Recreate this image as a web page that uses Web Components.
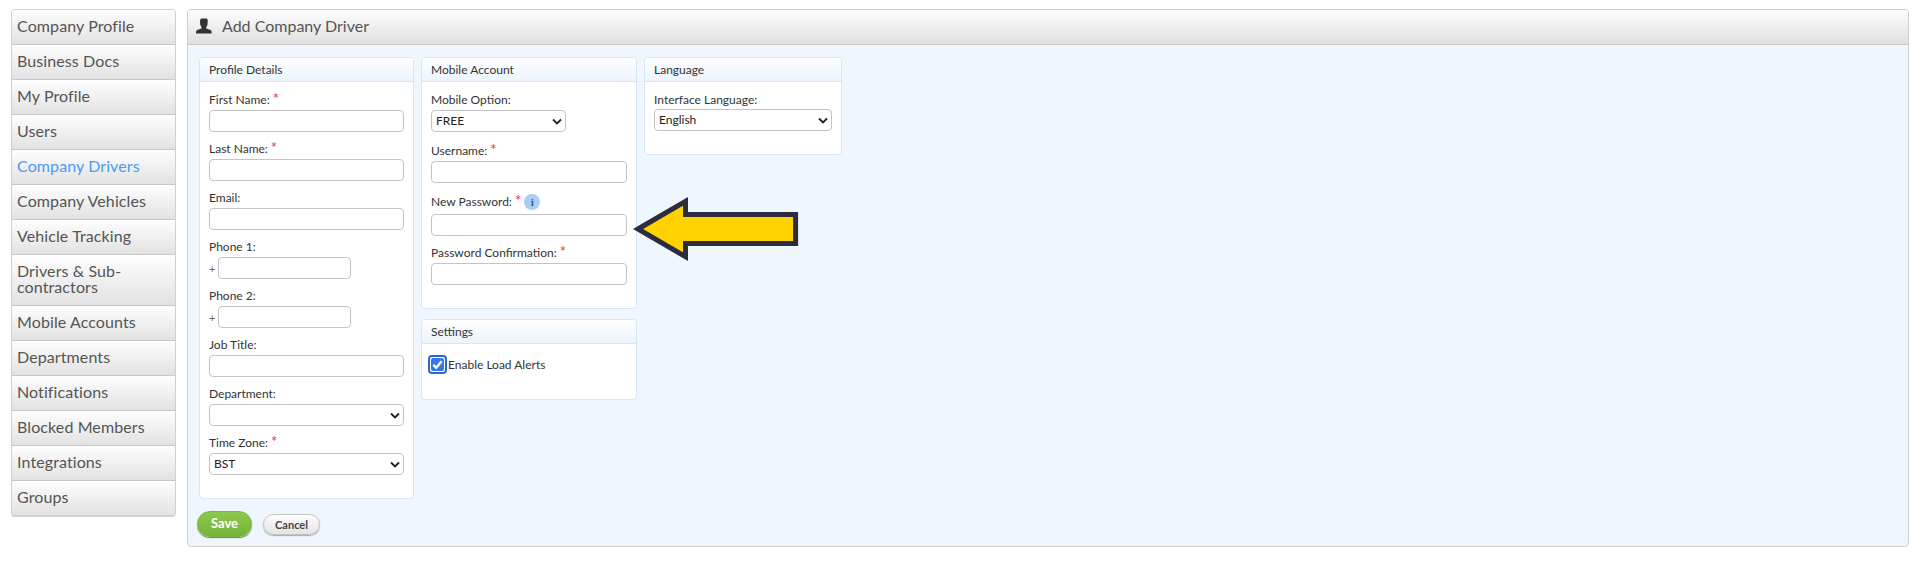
<!DOCTYPE html>
<html>
<head>
<meta charset="utf-8">
<title>Add Company Driver</title>
<style>
  html, body { margin: 0; background: #fff; }
  body { font-family: Lato, "Liberation Sans", sans-serif; color: #333; }
</style>
</head>
<body>
<driver-page>
  <side-nav slot="nav">
    <nav-item>Company Profile</nav-item>
    <nav-item>Business Docs</nav-item>
    <nav-item>My Profile</nav-item>
    <nav-item>Users</nav-item>
    <nav-item active>Company Drivers</nav-item>
    <nav-item>Company Vehicles</nav-item>
    <nav-item>Vehicle Tracking</nav-item>
    <nav-item>Drivers &amp; Sub-<br>contractors</nav-item>
    <nav-item>Mobile Accounts</nav-item>
    <nav-item>Departments</nav-item>
    <nav-item>Notifications</nav-item>
    <nav-item>Blocked Members</nav-item>
    <nav-item>Integrations</nav-item>
    <nav-item last>Groups</nav-item>
  </side-nav>
  <main-box slot="main" heading="Add Company Driver">
    <div style="display:flex;gap:7px;align-items:flex-start">
      <form-panel heading="Profile Details" style="width:215px;--pad-bottom:17px">
        <form-field label="First Name:" required></form-field>
        <form-field label="Last Name:" required></form-field>
        <form-field label="Email:"></form-field>
        <form-field label="Phone 1:" phone></form-field>
        <form-field label="Phone 2:" phone></form-field>
        <form-field label="Job Title:"></form-field>
        <form-field label="Department:" select=""></form-field>
        <form-field label="Time Zone:" required select="BST"></form-field>
      </form-panel>
      <div style="display:flex;flex-direction:column;gap:10px;width:216px">
        <form-panel heading="Mobile Account" style="--pad-bottom:17px">
          <form-field label="Mobile Option:" select="FREE" width="135" gap="8"></form-field>
          <form-field label="Username:" required></form-field>
          <form-field label="New Password:" required info></form-field>
          <form-field label="Password Confirmation:" required></form-field>
        </form-panel>
        <form-panel heading="Settings" style="--pad-bottom:0px">
          <check-row>Enable Load Alerts</check-row>
        </form-panel>
      </div>
      <form-panel heading="Language" style="width:198px;--pad-bottom:17px">
        <form-field label="Interface Language:" select="English" short></form-field>
      </form-panel>
    </div>
    <div style="display:flex;align-items:center;gap:11px;margin:12px 0 0 -2px">
      <app-button primary>Save</app-button>
      <app-button>Cancel</app-button>
    </div>
  </main-box>
  <call-arrow slot="main"></call-arrow>
</driver-page>

<script>
class DriverPage extends HTMLElement {
  constructor() {
    super();
    this.attachShadow({mode: 'open'}).innerHTML = `
      <style>
        :host { display: flex; align-items: flex-start; gap: 11px; padding: 9px 11px 0; position: relative; }
        .main { flex: 1; min-width: 0; }
      </style>
      <slot name="nav"></slot>
      <div class="main"><slot name="main"></slot></div>
    `;
  }
}

class SideNav extends HTMLElement {
  constructor() {
    super();
    this.attachShadow({mode: 'open'}).innerHTML = `
      <style>
        :host { display: block; width: 165px; flex: none; border: 1px solid #d0d0d0; border-bottom-width: 2px; border-radius: 4px; overflow: hidden; box-sizing: border-box; }
      </style>
      <slot></slot>
    `;
  }
}

class NavItem extends HTMLElement {
  constructor() {
    super();
    this.attachShadow({mode: 'open'}).innerHTML = `
      <style>
        :host { display: block; padding: 8px 5px 10px; font-size: 16px; letter-spacing: .1px; line-height: 16px; color: #555;
          background: linear-gradient(#fefefe, #e2e2e2); border-bottom: 1px solid #c8c8c8; }
        :host([active]) { color: #4a9af5; }
        :host([last]) { border-bottom: 0; }
      </style>
      <slot></slot>
    `;
  }
}

class MainBox extends HTMLElement {
  constructor() {
    super();
    const heading = this.getAttribute('heading') || '';
    this.attachShadow({mode: 'open'}).innerHTML = `
      <style>
        :host { display: block; height: 538px; box-sizing: border-box; border: 1px solid #ccc; border-radius: 4px; background: #eff6fe; overflow: hidden; }
        .head { display: flex; align-items: center; gap: 9px; height: 34px; padding-left: 8px; font-size: 16px; color: #555;
          background: linear-gradient(#fefefe, #dfdfdf); border-bottom: 1px solid #c8c8c8; }
        .head span { margin-top: -3px; }
        svg { width: 17px; height: 17px; display: block; margin-top: -2px; }
        .body { padding: 12px 11px; }
      </style>
      <div class="head">
        <svg viewBox="0 0 17 17"><path fill="#333" d="M5 .5h6l.8 2-.4 4.500-1.200 2v1.500l4.300 1.500c.8.3 1.200 1 1.200 3.500H0c0-2.500.4-3.200 1.200-3.500l4.300-1.500V9l-1.200-2-.4-4.500z"/></svg>
        <span>${heading}</span>
      </div>
      <div class="body"><slot></slot></div>
    `;
  }
}

class FormPanel extends HTMLElement {
  constructor() {
    super();
    const heading = this.getAttribute('heading') || '';
    this.attachShadow({mode: 'open'}).innerHTML = `
      <style>
        :host { display: block; box-sizing: border-box; border: 1px solid #d3e6fa; border-radius: 4px; background: #fff; overflow: hidden; }
        .title { height: 23px; line-height: 23px; padding-left: 9px; font-size: 12px; color: #333;
          background: linear-gradient(#fff, #ebf4fd); border-bottom: 1px solid #d3e6fa; }
        .content { padding: 7px 9px var(--pad-bottom, 17px); }
      </style>
      <div class="title">${heading}</div>
      <div class="content"><slot></slot></div>
    `;
  }
}

class FormField extends HTMLElement {
  constructor() {
    super();
    const label = this.getAttribute('label') || '';
    const req = this.hasAttribute('required') ? '<span class="req">*</span>' : '';
    const info = this.hasAttribute('info') ? '<span class="info">i</span>' : '';
    const isSelect = this.hasAttribute('select');
    const width = this.getAttribute('width');
    const control = isSelect
      ? `<div class="sel" style="${width ? 'width:' + width + 'px' : ''}">${this.getAttribute('select')}
           <svg viewBox="0 0 10 7"><path d="M1 1.500l4 4 4-4" fill="none" stroke="#222" stroke-width="1.800"/></svg></div>`
      : `<input type="text" class="${this.hasAttribute('phone') ? 'short' : ''}">`;
    this.attachShadow({mode: 'open'}).innerHTML = `
      <style>
        :host { display: block; margin-bottom: ${6 + Number(this.getAttribute('gap') ? 2 : 0)}px; font-size: 12px; color: #333; }
        :host([short]) .lab { height: 20px; }
        :host([info]) .lab { height: 25px; }
        .lab { height: 21px; display: flex; align-items: center; }
        .req { color: #e33; margin-left: 3px; font-size: 15px; line-height: 14px; margin-top: -3px; }
        .info { width: 16px; height: 16px; margin-left: 3px; border-radius: 50%; background: #a9cdf5; color: #2a5d9c;
          font: bold 11px/16px "Liberation Serif", serif; text-align: center; }
        .row { display: flex; align-items: center; gap: 3px; color: #666; font-size: 11px; }
        input, .sel { box-sizing: border-box; width: 100%; height: 22px; border: 1px solid #c4c4c4; border-radius: 4px; background: #fff; margin: 0; padding: 0 4px; outline: none; }
        input.short { width: 133px; }
        .sel { position: relative; line-height: 20px; font-size: 12px; color: #222; }
        .sel svg { position: absolute; right: 3px; top: 7px; width: 10px; height: 7px; }
      </style>
      <div class="lab">${label}${req}${info}</div>
      ${this.hasAttribute('phone') ? `<div class="row">+ ${control}</div>` : control}
    `;
  }
}

class CheckRow extends HTMLElement {
  constructor() {
    super();
    this.attachShadow({mode: 'open'}).innerHTML = `
      <style>
        :host { display: flex; align-items: center; height: 19px; margin: 4px 0 25px -3px; font-size: 12px; color: #333; }
        .box { width: 19px; height: 19px; box-sizing: border-box; border: 2px solid #2a66cc; border-radius: 4px; background: #fff; padding: 1px; margin-right: 1px; }
        .box i { display: block; width: 100%; height: 100%; background: #3478f0; border-radius: 2px; }
        svg { display: block; width: 100%; height: 100%; }
      </style>
      <div class="box"><i><svg viewBox="0 0 11 11"><path d="M2 5.800l2.400 2.400L9 2.800" fill="none" stroke="#fff" stroke-width="2"/></svg></i></div>
      <slot></slot>
    `;
  }
}

class AppButton extends HTMLElement {
  constructor() {
    super();
    this.attachShadow({mode: 'open'}).innerHTML = `
      <style>
        :host { display: block; height: 21px; width: 57px; box-sizing: border-box; line-height: 19px; text-align: center; border-radius: 11px;
          font-size: 11px; font-weight: 700; color: #444; background: linear-gradient(#fdfdfd, #e4e4e4); border: 1px solid #c4c4c4; box-shadow: 0 1px 1px #aaa; }
        :host([primary]) { height: 26px; width: 55px; line-height: 22px; border-radius: 13px; font-size: 13px; color: #fff;
          background: linear-gradient(#8cc84b, #76b33a); border-color: #79b63f; box-shadow: 0 1px 1px #5c8c2e; }
      </style>
      <slot></slot>
    `;
  }
}

// callout drawn over the form
class CallArrow extends HTMLElement {
  constructor() {
    super();
    this.attachShadow({mode: 'open'}).innerHTML = `
      <style>
        :host { position: absolute; left: 632px; top: 195px; width: 170px; height: 70px; }
        svg { display: block; width: 170px; height: 70px; }
      </style>
      <svg viewBox="0 0 170 70"><path d="M6 34L53.500 6.300V19.500H163.600V48.500H53.500V61.700z" fill="#ffd200" stroke="#2b2d3e" stroke-width="5"/></svg>
    `;
  }
}

customElements.define('driver-page', DriverPage);
customElements.define('side-nav', SideNav);
customElements.define('nav-item', NavItem);
customElements.define('main-box', MainBox);
customElements.define('form-panel', FormPanel);
customElements.define('form-field', FormField);
customElements.define('check-row', CheckRow);
customElements.define('app-button', AppButton);
customElements.define('call-arrow', CallArrow);
</script>
</body>
</html>
